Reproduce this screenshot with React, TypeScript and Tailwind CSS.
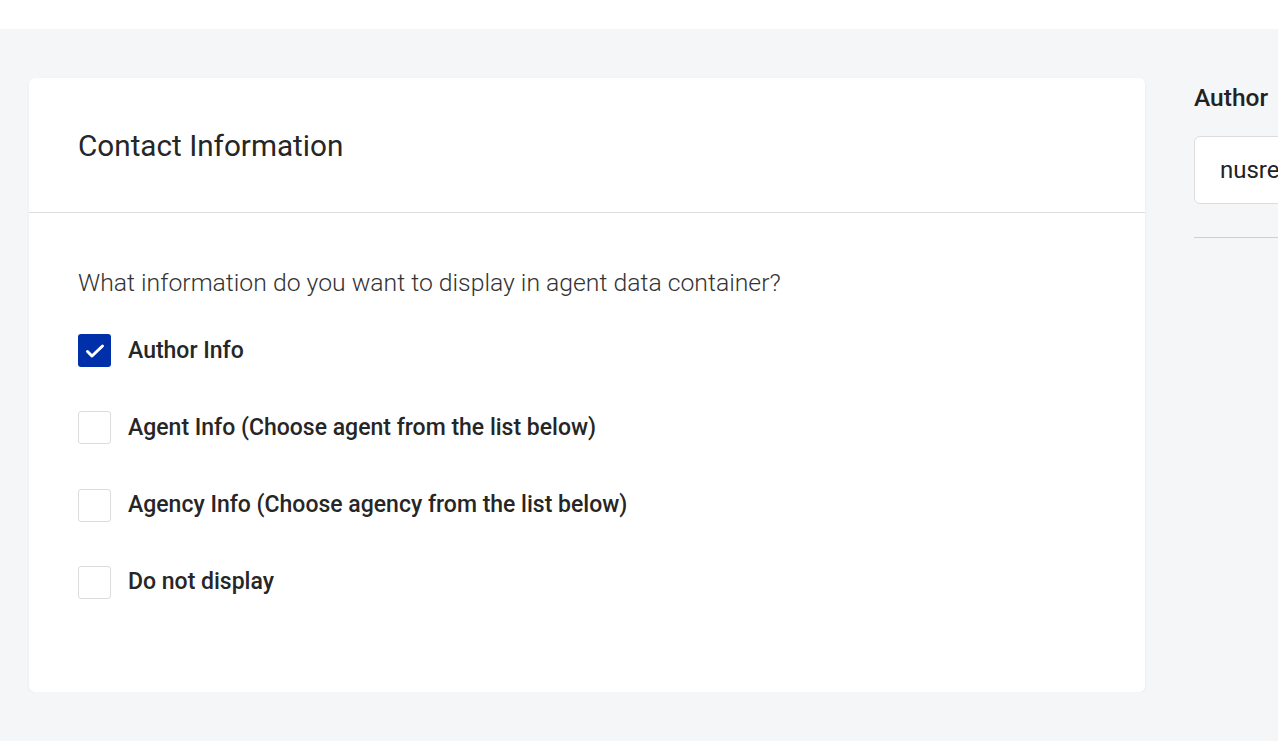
import React, { useState } from 'react'

const options = [
    'Author Info',
    'Agent Info (Choose agent from the list below)',
    'Agency Info (Choose agency from the list below)',
    'Do not display',
]

const App = () => {
    const [selected, setSelected] = useState(0)

    return (
        <div className="min-h-screen bg-[#f5f6f8] font-['Roboto',sans-serif] text-[#222222]">
            <div className="h-[29px] bg-white" />
            <div className="flex gap-[49px] pl-[29px] pt-[49px] overflow-hidden">
                {/* main card */}
                <div className="w-[1116px] shrink-0 rounded-md bg-white shadow-[0_1px_3px_rgba(0,0,0,0.06)]">
                    <div className="flex h-[135px] items-center border-b border-[#dedede] px-[49px] pt-[2px]">
                        <h2 className="text-[29.7px] font-normal leading-none text-[#262626]">Contact Information</h2>
                    </div>
                    <div className="px-[49px] pt-[54px] pb-[93px]">
                        <p className="text-[24.75px] font-light leading-[32px] text-[#333333]">
                            What information do you want to display in agent data container?
                        </p>
                        <div className="mt-[35px] flex flex-col gap-[44.3px]">
                            {options.map((label, i) => (
                                <label key={label} className="flex cursor-pointer items-center gap-[17px]" onClick={() => setSelected(i)}>
                                    {selected === i ? (
                                        <span className="flex h-[33px] w-[33px] items-center justify-center rounded-[3px] bg-[#0030a9]">
                                            <svg width="24" height="24" viewBox="0 0 24 24" fill="none" stroke="white" strokeWidth="3" strokeLinecap="round" strokeLinejoin="round">
                                                <path d="M4.5 12.5l4.5 4.5L19.5 7" />
                                            </svg>
                                        </span>
                                    ) : (
                                        <span className="h-[33px] w-[33px] rounded-[3px] border border-[#dcdcdc] bg-white" />
                                    )}
                                    <span className="text-[23px] font-medium leading-[28px] text-[#262626]">{label}</span>
                                </label>
                            ))}
                        </div>
                    </div>
                </div>

                {/* side column */}
                <div className="w-[300px] shrink-0">
                    <div className="pt-[6px] text-[24.5px] font-medium leading-[28px] text-[#222222]">Author</div>
                    <div className="mt-[24px] flex h-[68px] items-center rounded-md border border-[#dddddd] bg-white px-[25px] text-[24px] text-[#222222]">
                        nusreen
                    </div>
                    <div className="mt-[33px] border-t border-[#cfcfcf]" />
                </div>
            </div>
        </div>
    )
}

export default App
